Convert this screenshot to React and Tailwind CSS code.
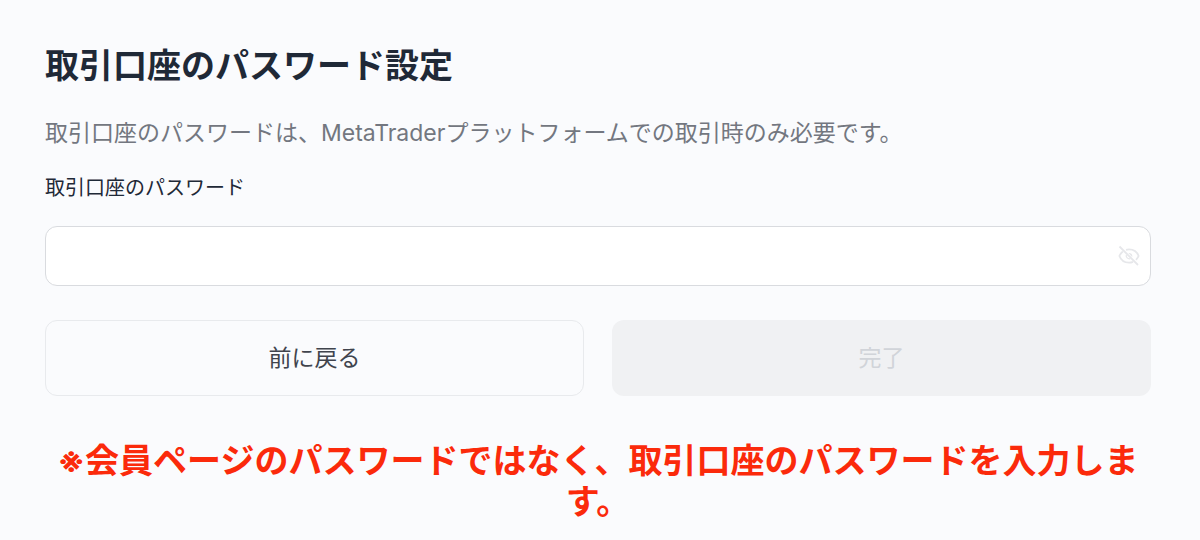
import { useState } from 'react';

function EyeOffIcon() {
  return (
    <svg
      viewBox="0 0 24 24"
      fill="none"
      stroke="currentColor"
      strokeWidth="1.8"
      className="size-6"
      aria-hidden="true"
    >
      <path d="M2.500 2.500l18.500 18.500" />
      <path d="M9 5.800A11 11 0 0 1 12 5.400c4.700 0 8.200 2.800 9.600 6.600a11 11 0 0 1-2.600 3.800" />
      <path d="M5.800 7.500A11.500 11.500 0 0 0 2.400 12c1.400 3.800 4.900 6.600 9.600 6.600a10 10 0 0 0 4-.8" />
      <path d="M11.300 9a3.200 3.200 0 0 1 3.900 3.900z" fill="currentColor" stroke="none" />
      <path d="M9.300 10.800a3.200 3.200 0 0 0 3.900 3.900" strokeWidth="1.2" />
    </svg>
  );
}

export default function App() {
  const [password, setPassword] = useState('');
  const [visible, setVisible] = useState(false);

  return (
    <main className="min-h-screen bg-[#fafbfd] pt-10 pr-[49px] pl-[45px] font-[Inter,'Noto_Sans_CJK_JP',sans-serif] text-[#1f2937]">
      <h1 className="text-[34px] leading-[52px] font-bold">取引口座のパスワード設定</h1>
      <p className="mt-6 text-[23px] leading-[34px] text-[#737780]">
        取引口座のパスワードは、MetaTraderプラットフォームでの取引時のみ必要です。
      </p>

      <form onSubmit={(e) => e.preventDefault()}>
        <label htmlFor="password" className="mt-6 block text-[20px] leading-7">
          取引口座のパスワード
        </label>
        <div className="relative mt-6">
          <input
            id="password"
            type={visible ? 'text' : 'password'}
            value={password}
            onChange={(e) => setPassword(e.target.value)}
            className="block h-15 w-full rounded-xl border border-[#d9dbdf] bg-white pr-14 pl-5 text-[22px] outline-none"
          />
          <button
            type="button"
            aria-label="パスワードを表示"
            onClick={() => setVisible(!visible)}
            className="absolute inset-y-0 right-2 px-0.5 text-[#e6e7ea]"
          >
            <EyeOffIcon />
          </button>
        </div>

        <div className="mt-[34px] grid grid-cols-2 gap-7">
          <button type="button" className="h-19 rounded-xl border border-[#e8eaed] text-[23px] text-[#40444d]">
            前に戻る
          </button>
          <button type="submit" disabled className="h-19 rounded-xl bg-[#f0f1f3] text-[23px] text-[#d1d4d9]">
            完了
          </button>
        </div>
      </form>

      <p className="mt-11 text-center text-[34px] leading-[41px] font-bold text-[#fb2a0b]">
        ※会員ページのパスワードではなく、取引口座のパスワードを入力します。
      </p>
    </main>
  );
}
